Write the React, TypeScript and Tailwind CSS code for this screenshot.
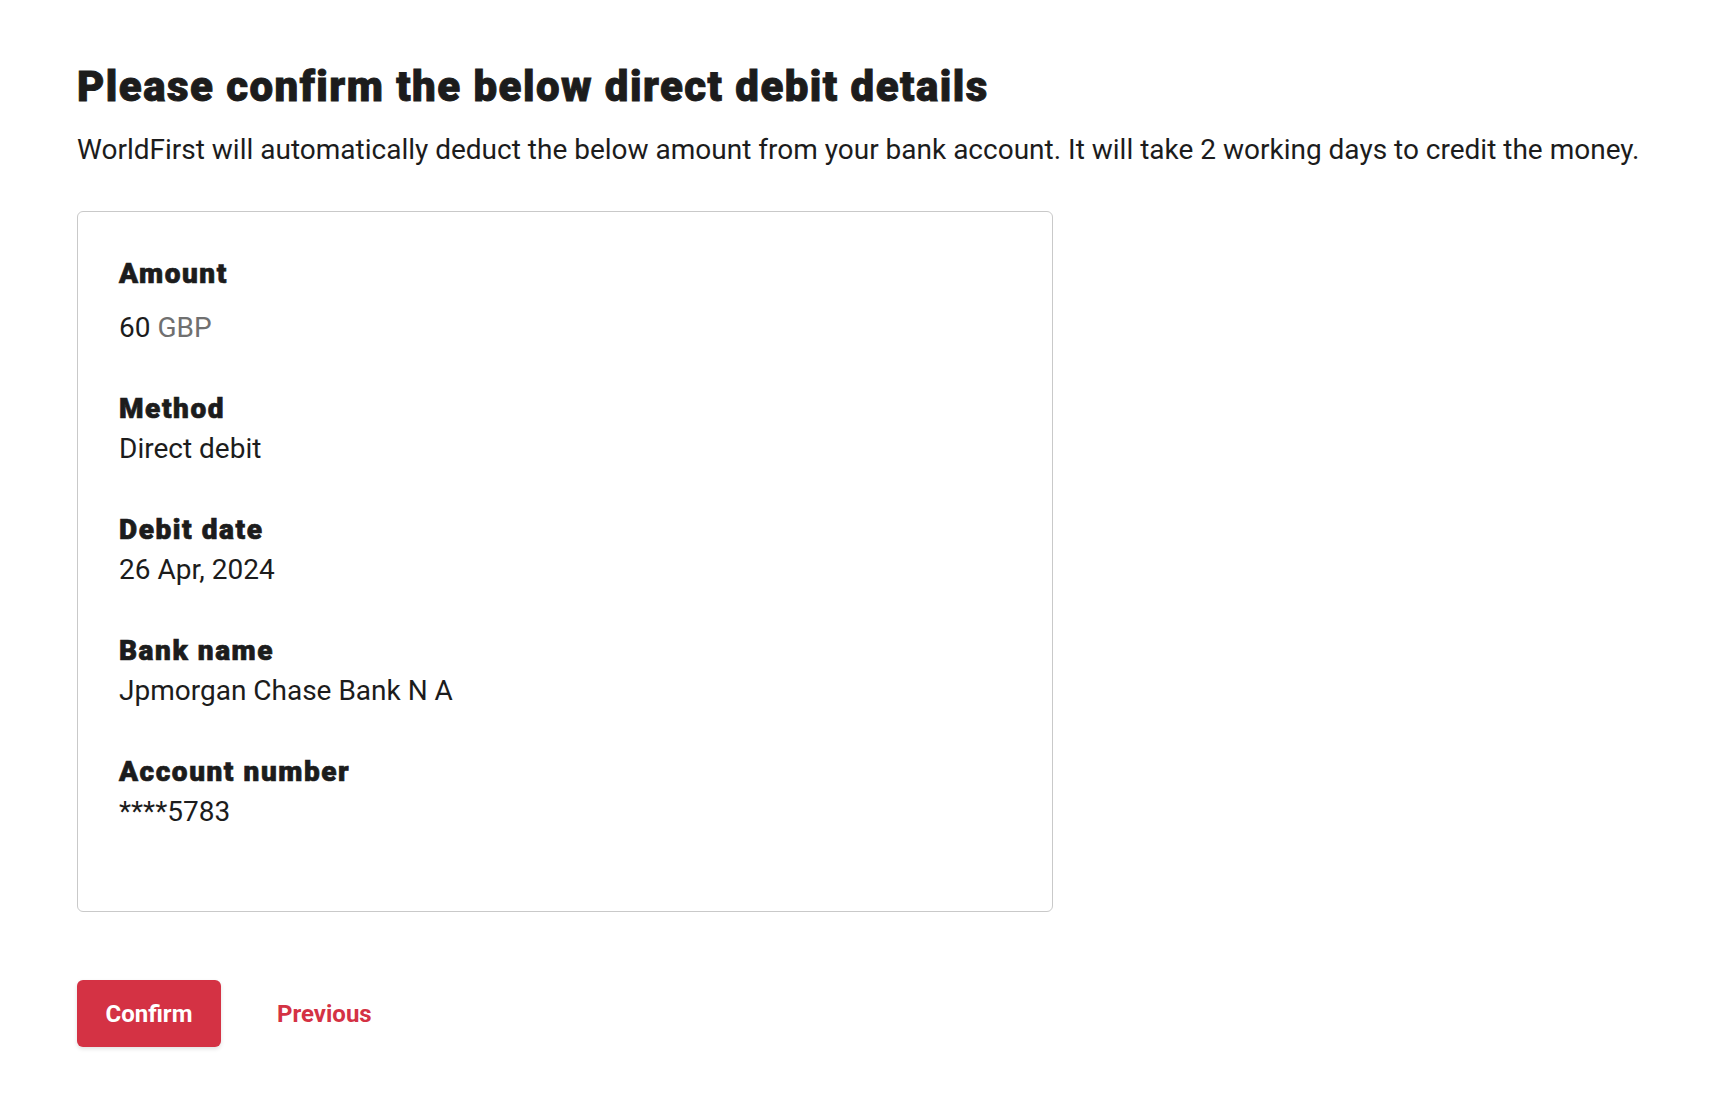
import React from "react";

type Row = { label: string; value: React.ReactNode; first?: boolean };

const rows: Row[] = [
  {
    label: "Amount",
    value: (
      <>
        60 <span className="text-[#707070]">GBP</span>
      </>
    ),
    first: true,
  },
  { label: "Method", value: "Direct debit" },
  { label: "Debit date", value: "26 Apr, 2024" },
  { label: "Bank name", value: "Jpmorgan Chase Bank N A" },
  { label: "Account number", value: "****5783" },
];

// Roboto 900 isn't installed here, so the heavy labels get a thin stroke + tracking
const DetailRow = ({ label, value, first }: Row) => (
  <div className="flex flex-col">
    <div className="text-[28px] leading-[40px] font-black tracking-[1.55px] text-[#1c1c1c] [-webkit-text-stroke:0.7px_#1c1c1c]">
      {label}
    </div>
    <div className={`text-[28px] leading-[40px] text-[#1c1c1c] ${first ? "mt-[14px]" : ""}`}>
      {value}
    </div>
  </div>
);

export default function App() {
  return (
    <div
      className="min-h-screen bg-white px-[77px] pt-[63px]"
      style={{ fontFamily: "Roboto, 'Liberation Sans', sans-serif" }}
    >
      <h1 className="text-[42px] leading-[48px] font-black tracking-[1.45px] text-[#1c1c1c] whitespace-nowrap [-webkit-text-stroke:0.9px_#1c1c1c]">
        Please confirm the below direct debit details
      </h1>
      <p className="mt-[21px] text-[28px] leading-[36px] text-[#1c1c1c] whitespace-nowrap">
        WorldFirst will automatically deduct the below amount from your bank account. It will take 2
        working days to credit the money.
      </p>

      <div className="mt-[43px] w-[976px] rounded-[6px] border border-[#c9c9c9] pl-[41px] pr-10 pt-[42px] pb-[79px]">
        <div className="flex flex-col gap-[41px]">
          {rows.map((r) => (
            <DetailRow key={r.label} {...r} />
          ))}
        </div>
      </div>

      <div className="mt-[68px] flex items-center gap-[56px]">
        <button className="h-[67px] w-[144px] rounded-[6px] bg-[#d43244] text-[24px] font-bold text-white shadow-[0_2px_4px_rgba(0,0,0,0.12)]">
          Confirm
        </button>
        <button className="text-[24px] font-bold text-[#d43244]">Previous</button>
      </div>
    </div>
  );
}
